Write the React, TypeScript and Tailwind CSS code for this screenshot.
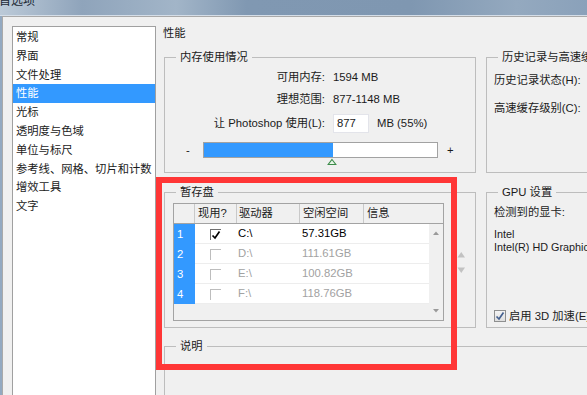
import React from 'react'

const menu = ['常规', '界面', '文件处理', '性能', '光标', '透明度与色域', '单位与标尺', '参考线、网格、切片和计数', '增效工具', '文字']

const drives = [
  { n: 1, on: true, d: 'C:\\', free: '57.31GB' },
  { n: 2, on: false, d: 'D:\\', free: '111.61GB' },
  { n: 3, on: false, d: 'E:\\', free: '100.82GB' },
  { n: 4, on: false, d: 'F:\\', free: '118.76GB' },
]

function Group({ title, className, children }: { title: string; className: string; children?: React.ReactNode }) {
  return (
    <div className={`shrink-0 border border-[#bdbdbd] ${className}`}>
      <div className="-mt-[9px] ml-[11px] w-fit bg-[#f0f0f0] px-[4px] leading-[16px] whitespace-nowrap">{title}</div>
      {children}
    </div>
  )
}

function Tick({ color }: { color: string }) {
  return (
    <svg width="10" height="10" viewBox="0 0 10 10" className="block">
      <path d="M1.5 5.5 L4 8 L8.5 1.5" fill="none" stroke={color} strokeWidth="1.7" />
    </svg>
  )
}

export default function App() {
  return (
    <div className="w-[587px] h-[395px] overflow-hidden flex flex-col bg-[#9aafc6] text-[11.3px] text-[#1b1b1b] font-['Liberation_Sans','Noto_Sans_CJK_SC',sans-serif]">
      {/* title bar */}
      <div className="h-[16px] shrink-0 border-b border-[#d5dee8] bg-[linear-gradient(90deg,#bccad8_0%,#8fa4bb_14%,#a2b5c8_30%,#8098b2_42%,#7f97b1_70%,#94a9bf_88%,#8aa1ba_100%)]">
        <div className="-mt-[7px] -ml-[1px] text-[12px] leading-[16px] text-[#1e2a36]">首选项</div>
      </div>

      <div className="flex flex-1">
        <div className="w-[2px] shrink-0 bg-[#93a9c1]" />
        <div className="flex flex-1 border-l border-t border-[#a9a9a9] bg-[#f0f0f0]">
          {/* left list */}
          <div className="ml-[9px] mt-[9px] w-[144px] h-[400px] shrink-0 border border-[#a0a0a0] bg-white pt-[1px]">
            {menu.map((m, i) => (
              <div
                key={m}
                className={`h-[18.8px] flex items-center pl-[3px] whitespace-nowrap ${i === 3 ? 'bg-[#3399ff] text-white' : ''}`}
              >
                {m}
              </div>
            ))}
          </div>

          {/* right side */}
          <div className="ml-[7px] pt-[8px] flex flex-col w-[430px] shrink-0">
            <div className="leading-[16px]">性能</div>

            <div className="mt-[16px] ml-[1px] flex">
              <Group title="内存使用情况" className="w-[312px] h-[116px]">
                <div className="mt-[4px] flex leading-[16px]">
                  <div className="w-[160px] text-right">可用内存:</div>
                  <div className="ml-[8px]">1594 MB</div>
                </div>
                <div className="mt-[6px] flex leading-[16px]">
                  <div className="w-[160px] text-right">理想范围:</div>
                  <div className="ml-[8px]">877-1148 MB</div>
                </div>
                <div className="mt-[7px] flex items-center h-[19px]">
                  <div className="w-[160px] text-right">让 Photoshop 使用(L):</div>
                  <div className="ml-[8px] w-[36px] h-[19px] bg-white border border-[#e3e4ea] pl-[3px] leading-[17px]">877</div>
                  <div className="ml-[8px]">MB (55%)</div>
                </div>
                <div className="mt-[9px] flex items-center h-[16px]">
                  <div className="w-[38px] pl-[21px] leading-[16px]">-</div>
                  <div className="w-[235px] h-[16px] border border-[#a2a2a2] bg-white">
                    <div className="w-[129px] h-full bg-[#3399ff]" />
                  </div>
                  <div className="ml-[9px] leading-[16px]">+</div>
                </div>
                <svg width="10" height="8" viewBox="0 0 10 8" className="block ml-[162px]">
                  <path d="M5 1.5 L8.8 6.5 L1.2 6.5 Z" fill="#e9f6ea" stroke="#3d8c4a" strokeWidth="1.1" />
                </svg>
              </Group>

              <Group title="历史记录与高速缓存" className="ml-[10px] w-[140px] h-[116px]">
                <div className="mt-[7px] pl-[7px] leading-[16px] whitespace-nowrap">历史记录状态(H):</div>
                <div className="mt-[12px] pl-[7px] leading-[16px] whitespace-nowrap">高速缓存级别(C):</div>
              </Group>
            </div>

            <div className="mt-[19px] ml-[1px] flex">
              <Group title="暂存盘" className="w-[312px] h-[136px]">
                <div className="flex items-start">
                  <div className="ml-[8px] mt-[3px] w-[271px] h-[118px] shrink-0 border border-[#a3a3a3] bg-[#f0f0f0] flex flex-col">
                    <div className="h-[20px] shrink-0 flex border-b border-[#a3a3a3] leading-[19px] whitespace-nowrap">
                      <div className="w-[21px] border-r border-[#c9c9c9]" />
                      <div className="w-[42px] border-r border-[#c9c9c9] pl-[3px]">现用?</div>
                      <div className="w-[63px] border-r border-[#c9c9c9] pl-[2px]">驱动器</div>
                      <div className="w-[64px] border-r border-[#c9c9c9] pl-[3px]">空闲空间</div>
                      <div className="flex-1 pl-[3px]">信息</div>
                    </div>
                    <div className="flex flex-1">
                      <div className="w-[255px] flex flex-col">
                        {drives.map((r) => (
                          <div key={r.n} className="h-[20px] flex">
                            <div className="w-[21px] bg-[#3399ff] text-white pl-[3px] leading-[20px]">{r.n}</div>
                            <div className={`flex-1 flex bg-white border-b border-[#ededed] leading-[19px] ${r.on ? 'text-black' : 'text-[#a2a2a2]'}`}>
                              <div className="w-[42px] pl-[15px] pt-[5px]">
                                <div className={`w-[11px] h-[11px] border-l border-t ${r.on ? 'border-[#6f6f6f]' : 'border-[#bdbdbd]'}`}>
                                  {r.on && <Tick color="#000" />}
                                </div>
                              </div>
                              <div className="w-[63px] pl-[1px]">{r.d}</div>
                              <div className="w-[64px] pl-[2px]">{r.free}</div>
                            </div>
                          </div>
                        ))}
                      </div>
                      <svg width="14" height="95" viewBox="0 0 14 95" className="block">
                        <path d="M4 11 L10 11 L7 7.5 Z" fill="#9a9a9a" />
                        <path d="M4 85 L10 85 L7 88.5 Z" fill="#9a9a9a" />
                      </svg>
                    </div>
                  </div>
                  <svg width="9" height="24" viewBox="0 0 9 24" className="block ml-[13px] mt-[51px]">
                    <path d="M0.5 6.5 L8 6.5 L4.25 1 Z" fill="#c2c2c2" />
                    <path d="M0.5 16.5 L8 16.5 L4.25 22 Z" fill="#c2c2c2" />
                  </svg>
                </div>
              </Group>

              <Group title="GPU 设置" className="ml-[10px] w-[140px] h-[136px]">
                <div className="pl-[7px] whitespace-nowrap">
                  <div className="mt-[4px] leading-[16px]">检测到的显卡:</div>
                  <div className="mt-[8px] text-[10.8px] leading-[13px]">Intel</div>
                  <div className="text-[10.8px] leading-[13px]">Intel(R) HD Graphics</div>
                  <div className="mt-[54px] flex items-center h-[16px]">
                    <div className="w-[12px] h-[12px] border border-[#8e8f8f] bg-[linear-gradient(180deg,#f4f4f4,#dedede)] flex items-center justify-center">
                      <Tick color="#44608f" />
                    </div>
                    <div className="ml-[3px] leading-[16px]">启用 3D 加速(E)</div>
                  </div>
                </div>
              </Group>
            </div>

            <div className="mt-[18px] ml-[1px] flex">
              <Group title="说明" className="w-[440px] h-[80px]" />
            </div>
          </div>
        </div>
      </div>

      {/* annotation box */}
      <div className="absolute left-[156px] top-[177px] w-[301px] h-[193px] border-[6px] border-[#ff3636]" />
    </div>
  )
}
